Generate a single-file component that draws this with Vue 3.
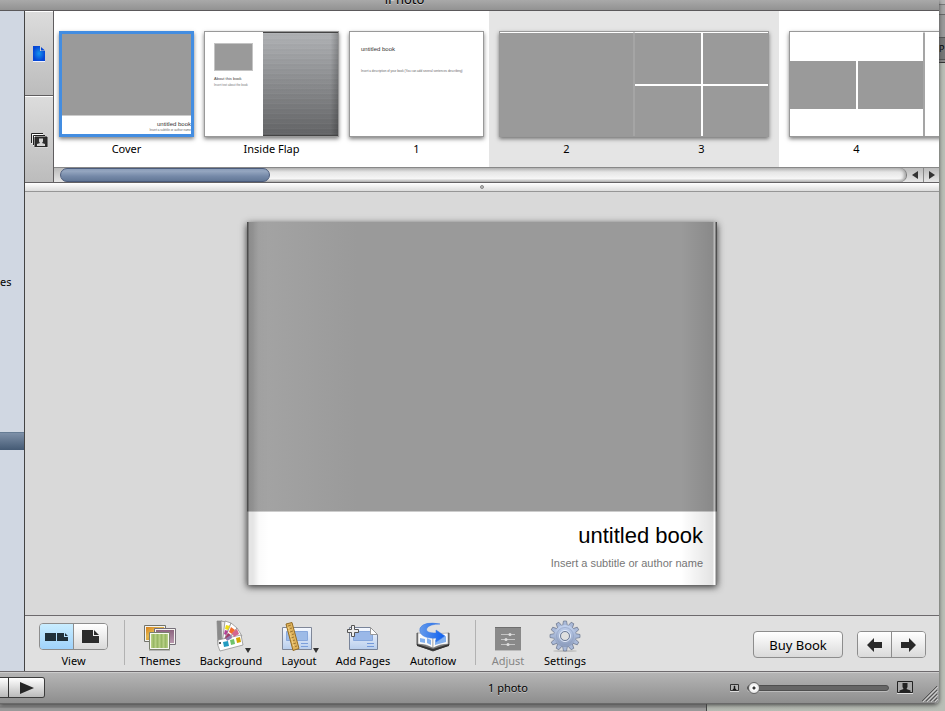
<script setup>
import { ref } from 'vue'

const view = ref('spread')
const zoom = ref(0)
</script>

<template>
  <div class="desktop">
    <div class="backdrop-right" aria-hidden="true"><span>P</span></div>
    <div class="backdrop-bottom" aria-hidden="true"></div>

    <div class="window">
      <header class="titlebar"><span>iPhoto</span></header>

      <div class="body">
        <aside class="sidebar">
          <span class="source">es</span>
          <div class="selected"></div>
        </aside>

        <main class="main">
          <section class="browser">
            <nav class="tabs">
              <button class="tab" aria-label="Pages">
                <svg width="14" height="18" viewBox="0 0 14 18">
                  <defs>
                    <radialGradient id="bluePage">
                      <stop offset="0" stop-color="#1593ee" />
                      <stop offset="1" stop-color="#0546d6" />
                    </radialGradient>
                  </defs>
                  <path d="M1 1h7v5h5v10H1z" fill="url(#bluePage)" />
                  <path d="M9 2l4 3.500H9z" fill="#0546d6" />
                  <path d="M1 16.500h12" stroke="#eef1ff" />
                </svg>
              </button>
              <button class="tab" aria-label="Photos">
                <svg width="18" height="16" viewBox="0 0 18 16">
                  <path d="M2 12V2.500H13M4 14V4.500H15" fill="none" stroke="#fff" />
                  <path d="M1.500 11V1.500H13M3.500 13V3.500H15" fill="none" stroke="#222" />
                  <path d="M5 5h12v10H5z" fill="#2e2e2e" stroke="#222" />
                  <path d="M5 15.800h12.500" stroke="#fff" />
                  <path d="M9 6.500h4v3l-1 1.500 3 1v2H7v-2l3-1-1-1.500z" fill="#d5d5d5" />
                </svg>
              </button>
            </nav>

            <div class="strip">
              <div class="pages">
                <figure class="cell">
                  <div class="thumb cover">
                    <div class="photo"></div>
                    <div class="cover-text"><b>untitled book</b><small>Insert a subtitle or author name</small></div>
                  </div>
                  <figcaption>Cover</figcaption>
                </figure>
                <figure class="cell">
                  <div class="thumb flap">
                    <div class="flap-left">
                      <div class="photo"></div>
                      <b>About this book</b>
                      <small>Insert text about the book</small>
                    </div>
                    <div class="brushed"></div>
                  </div>
                  <figcaption>Inside Flap</figcaption>
                </figure>
                <figure class="cell">
                  <div class="thumb intro">
                    <b>untitled book</b>
                    <small>Insert a description of your book (You can add several sentences describing)</small>
                  </div>
                  <figcaption>1</figcaption>
                </figure>
                <figure class="cell spread current">
                  <div class="thumb pair">
                    <div class="leaf full"></div>
                    <div class="leaf four"><i></i><i></i><i></i><i></i></div>
                  </div>
                  <figcaption><span>2</span><span>3</span></figcaption>
                </figure>
                <figure class="cell spread">
                  <div class="thumb pair">
                    <div class="leaf two"><i></i><i></i></div>
                    <div class="leaf"></div>
                  </div>
                  <figcaption><span>4</span><span></span></figcaption>
                </figure>
              </div>

              <div class="scrollbar">
                <div class="track"><div class="knob"></div></div>
                <button aria-label="Scroll left"><svg width="6" height="8"><path d="M6 0v8L0 4z" fill="#333" /></svg></button>
                <button aria-label="Scroll right"><svg width="6" height="8"><path d="M0 0v8l6-4z" fill="#333" /></svg></button>
              </div>
            </div>
          </section>

          <div class="splitter"><i></i></div>

          <section class="stage">
            <article class="book">
              <div class="book-photo"></div>
              <div class="book-text">
                <h1>untitled book</h1>
                <p>Insert a subtitle or author name</p>
              </div>
            </article>
          </section>

          <section class="toolbar">
            <div class="tool view-tool">
              <div class="segments">
                <button :class="{ on: view === 'spread' }" aria-label="Two-page view" @click="view = 'spread'">
                  <svg width="24" height="10"><path d="M0 1h11v8H0zM12 1h7v4h4v4H12zM20 1l3 3h-3z" fill="#20303a" /></svg>
                </button>
                <button :class="{ on: view === 'single' }" aria-label="Single-page view" @click="view = 'single'">
                  <svg width="18" height="14"><path d="M0 0h11v6h6v7H0zM12 0l5 5h-5z" fill="#2b2b2b" /></svg>
                </button>
              </div>
              <span>View</span>
            </div>
            <div class="rule"></div>

            <button class="tool w-themes">
              <svg width="36" height="32" viewBox="0 0 36 32">
                <defs>
                  <linearGradient id="gold" x2="1" y2="1"><stop offset="0" stop-color="#d8801c" /><stop offset=".4" stop-color="#e3b64c" /><stop offset="1" stop-color="#c77718" /></linearGradient>
                  <linearGradient id="plum" x1="0" x2="0" y1="0" y2="1"><stop offset="0" stop-color="#8d6580" /><stop offset="1" stop-color="#b897ad" /></linearGradient>
                </defs>
                <path d="M2.500 5.500h21v16h-21z" fill="#f4f4f0" stroke="#72736b" />
                <path d="M4 7h18v13H4z" fill="url(#gold)" />
                <path d="M12.500 8.500h21v16h-21z" fill="#f4f4f0" stroke="#77707a" />
                <path d="M14 10h18v13H14z" fill="url(#plum)" />
                <path d="M7.500 12.500h20v17h-20z" fill="#f8f9f2" stroke="#7b816f" />
                <path d="M9 14h17v14H9z" fill="#b7cf84" />
                <path d="M11.500 14v14M15.500 14v14M19.500 14v14M23.500 14v14" stroke="#98b864" stroke-width="2" />
                <path d="M7 30.500h21" stroke="#999" opacity=".6" />
              </svg>
              <span>Themes</span>
            </button>

            <button class="tool w-background">
              <svg width="36" height="32" viewBox="0 0 36 32">
                <g stroke="#858585" stroke-width=".7">
                  <path d="M4 1h5l1 26-5-2z" fill="#8a8a8a" />
                  <path d="M8 1l5 1-4 23z" fill="#e7e7e7" />
                  <path d="M12 1l6 2-9 22z" fill="#fff" />
                  <path d="M18 3l6 5L9 27z" fill="#fff" />
                  <path d="M24 8l5 8-19 12z" fill="#fff" />
                  <path d="M5 20l23-5 2 10-23 6q-3-5-2-11z" fill="#fff" />
                </g>
                <path d="M13 5l4 1-2 4-3-1z" fill="#f0dd16" />
                <path d="M12 10l3 1-2 4-2-1z" fill="#b33f95" />
                <path d="M18 7l4 3-3 4-3-2z" fill="#f36a29" />
                <path d="M15 13l3 2-4 5-2-2z" fill="#a13a66" />
                <path d="M19 13l5-4 2 5-5 3z" fill="#d3668f" />
                <path d="M13 18l5-3 1 3-5 3z" fill="#907caf" />
                <path d="M10 22l5-1 1 5-5 1z" fill="#249bc0" />
                <path d="M17 20l4-1 1 5-4 1z" fill="#70c36c" />
                <path d="M23 18l4-1 1 5-4 1z" fill="#d5a500" />
                <circle cx="7" cy="23" r="1" fill="#222" />
              </svg>
              <i class="caret"></i>
              <span>Background</span>
            </button>

            <button class="tool w-layout">
              <svg width="36" height="32" viewBox="0 0 36 32">
                <defs><linearGradient id="sheet" x1="0" x2="0" y1="0" y2="1"><stop offset="0" stop-color="#f6f9ff" /><stop offset="1" stop-color="#b8ceec" /></linearGradient></defs>
                <path d="M1.500 7.500h29v22h-29z" fill="url(#sheet)" stroke="#7f8798" />
                <path d="M5.500 11.500h21v9h-21z" fill="#9dbbe7" stroke="#88a8dc" />
                <path d="M20 23.500h7M20 26.500h7" stroke="#7b9fdb" />
                <path d="M5 4l6-1.500 7 26-6 2z" fill="#dfb35c" stroke="#946c24" />
                <path d="M10 5l-3 1M11 8l-2 .5M12 11l-3 1M13 14l-2 .5M13 17l-3 1M14 20l-2 .5M15 23l-3 1M16 26l-2 .5" stroke="#8f6a28" stroke-width=".8" />
                <path d="M7 7l6 20" stroke="#f3d68d" stroke-dasharray="2 1" />
              </svg>
              <i class="caret"></i>
              <span>Layout</span>
            </button>

            <button class="tool w-add">
              <svg width="36" height="32" viewBox="0 0 36 32">
                <path d="M4.500 7.500h21l7 7v15h-28z" fill="url(#sheet)" stroke="#78849a" />
                <path d="M8.500 11.500h19v9h-19z" fill="#9ab8e8" stroke="#86a7dc" />
                <path d="M25.500 7.500v7h7z" fill="#fff" stroke="#999" />
                <path d="M22 23.500h7M22 26.500h7" stroke="#7399da" />
                <path d="M6.500 5.500h3v4h4v3h-4v4h-3v-4h-4v-3h4z" fill="#eee" stroke="#555" />
              </svg>
              <span>Add Pages</span>
            </button>

            <button class="tool w-auto">
              <svg width="36" height="32" viewBox="0 0 36 32">
                <defs><linearGradient id="swoosh"><stop offset="0" stop-color="#669bea" /><stop offset="1" stop-color="#0b5ef1" /></linearGradient></defs>
                <path d="M2 13l16 6 16-6v12l-16 6-16-6z" fill="#777" stroke="#5a5a5a" />
                <path d="M2 24l16 5 16-5v2l-16 5-16-5z" fill="#343434" />
                <path d="M3 13q8-1 15 4v11q-7-4-15-4z" fill="#fafafa" stroke="#777" stroke-width=".5" />
                <path d="M33 13q-8-1-15 4v11q7-4 15-4z" fill="#fafafa" stroke="#777" stroke-width=".5" />
                <path d="M5 18l5 1v4l-5-1zM12 18l4 2v5l-4-2zM20 20l11-4v6l-11 3z" fill="#83b1ef" />
                <path d="M25 4Q9 1 5 8c-2 8 8 11 16 10v4l9-6-9-6v3C15 13 10 12 12 8q3-4 13-4z" fill="url(#swoosh)" stroke="#3f7ade" stroke-width=".5" />
              </svg>
              <span>Autoflow</span>
            </button>
            <div class="rule"></div>

            <button class="tool w-adjust" disabled>
              <svg width="36" height="32" viewBox="0 0 36 32">
                <path d="M5 7h26v23H5z" fill="#898989" />
                <path d="M5 7.500h26" stroke="#6e6e6e" />
                <path d="M5 30.500h26" stroke="#bbb" />
                <path d="M11 14.500h14M11 19.500h14M11 24.500h14" stroke="#c5c5c5" />
                <circle cx="20" cy="14.500" r="1.500" fill="#e0e0e0" /><circle cx="16" cy="19.500" r="1.500" fill="#e0e0e0" /><circle cx="18" cy="24.500" r="1.500" fill="#e0e0e0" />
              </svg>
              <span>Adjust</span>
            </button>

            <button class="tool w-settings">
              <svg width="36" height="32" viewBox="0 0 36 32">
                <defs><linearGradient id="gear" x1="0" x2="0" y1="0" y2="1"><stop offset="0" stop-color="#c3d3f0" /><stop offset="1" stop-color="#8c9cbc" /></linearGradient></defs>
                <ellipse cx="18" cy="31" rx="12" ry="1" fill="#aaa" opacity=".6" />
                <g fill="#a9b9d8" stroke="#5d687f" stroke-width=".6">
                  <path v-for="n in 12" :key="n" d="M15.500 6l1-5h3l1 5z" :transform="`rotate(${n * 30} 18 16)`" />
                </g>
                <circle cx="18" cy="16" r="11" fill="url(#gear)" />
                <circle cx="18" cy="16" r="8.500" fill="none" stroke="#8b9cbf" stroke-width=".6" />
                <circle cx="18" cy="16" r="5.500" fill="none" stroke="#e5edfc" />
                <circle cx="18" cy="16" r="4.500" fill="#e0e0e0" stroke="#6e7b96" />
              </svg>
              <span>Settings</span>
            </button>

            <button class="push buy">Buy Book</button>
            <div class="segments arrows">
              <button aria-label="Previous page"><svg width="16" height="14"><path d="M0 7l7-7v4h8v6H7v4z" fill="#292929" /></svg></button>
              <button aria-label="Next page"><svg width="16" height="14"><path d="M15 7L8 0v4H0v6h8v4z" fill="#292929" /></svg></button>
            </div>
          </section>
        </main>
      </div>

      <footer class="status">
        <div class="play">
          <button aria-label="Full screen"></button>
          <button aria-label="Play slideshow"><svg width="14" height="12"><path d="M0 0l14 6-14 6z" fill="#262626" /></svg></button>
        </div>
        <span class="count">1 photo</span>
        <label class="zoom">
          <svg width="9" height="8" viewBox="0 0 9 8"><path d="M.5.500h8v6h-8z" fill="#b5b5b5" stroke="#333" /><path d="M4 2h1v3H4zM3 5h3v1H3z" fill="#111" stroke="#222" stroke-width=".5" /><path d="M0 7.500h9" stroke="#ddd" /></svg>
          <input v-model="zoom" type="range" min="0" max="100" aria-label="Zoom" />
          <svg width="16" height="13" viewBox="0 0 16 13"><path d="M.5.500h15v11H.5z" fill="#a9a9a9" stroke="#222" /><path d="M5.500 2h5v4L9.500 8l4 1.500V11h-11V9.500l4-1.500-1-2z" fill="#222" /><path d="M0 12.500h16" stroke="#ddd" /></svg>
        </label>
        <svg class="grip" width="17" height="17" viewBox="0 0 17 17">
          <path d="M2 17L17 2M6 17L17 6M10 17l7-7M14 17l3-3" stroke="#ccc" />
          <path d="M1 16L16 1M5 16L16 5M9 16l7-7M13 16l3-3" stroke="#555" />
        </svg>
      </footer>
    </div>
  </div>
</template>

<style>
body { margin: 0; }
</style>

<style scoped>
* { box-sizing: border-box; }
button { font: inherit; color: inherit; border: 0; padding: 0; margin: 0; background: none; }
figure { margin: 0; }
svg { display: block; flex: none; }

.desktop {
  position: relative;
  display: flex;
  height: 100vh;
  min-height: 560px;
  padding: 0 6px 7px 0;
  overflow: hidden;
  background: linear-gradient(90deg, #a6aaa2, #b9beb6);
  font-family: "Noto Sans", "Open Sans", sans-serif;
  font-size: 11px;
  line-height: 14px;
  color: #000;
}
.backdrop-right {
  position: absolute;
  top: 0;
  right: 0;
  width: 6px;
  height: 63px;
  padding-top: 42px;
  overflow: hidden;
  background: linear-gradient(#b4b4b4 0 4px, #777 4px 5px, #a5a5a5 5px 14px, #666 14px 15px, #999 15px 37px, #555 37px 38px, #777 38px 59px, #555 59px 60px, #888 60px 62px, #333 62px);
  font-size: 9px;
}
.backdrop-bottom {
  position: absolute;
  left: 0;
  right: 238px;
  bottom: 0;
  height: 10px;
  background: linear-gradient(#777, #939393 5px, #777 6px, #999 7px);
  border-right: 1px solid #444;
}
.window {
  position: relative;
  display: flex;
  flex: 1;
  flex-direction: column;
  min-width: 0;
  overflow: hidden;
  border-radius: 0 0 5px 0;
  background: #e0e0e0;
  box-shadow: 0 1px 4px #444;
}
.titlebar {
  display: flex;
  flex: none;
  align-items: flex-end;
  justify-content: center;
  height: 11px;
  padding: 0 130px 1px 0;
  background: linear-gradient(#a9a9a9, #929292);
  border-bottom: 1px solid #5b595b;
  font-size: 13px;
  line-height: 20px;
}
.titlebar span { text-shadow: 0 1px #ccc; }
.body { display: flex; flex: 1; min-height: 0; }
.sidebar {
  flex: none;
  width: 25px;
  padding-top: 264px;
  background: #d0d7e2;
  border-right: 1px solid #444;
}
.source { display: block; }
.selected {
  height: 18px;
  margin-top: 143px;
  background: linear-gradient(#7e90a8, #445a74);
  border-top: 1px solid #667c94;
}
.main { display: flex; flex: 1; flex-direction: column; min-width: 0; }

.browser { display: flex; flex: none; height: 172px; border-bottom: 1px solid #636163; }
.tabs { display: flex; flex: none; flex-direction: column; width: 29px; border-right: 1px solid #5f5d5f; }
.tab {
  display: flex;
  flex: 1;
  align-items: center;
  justify-content: center;
  background: linear-gradient(#dcdcdc, #bcbcbc);
  border-top: 1px solid #fff;
}
.tab:first-child { flex: none; height: 85px; border-bottom: 1px solid #5f5d5f; }
.strip { display: flex; flex: 1; flex-direction: column; min-width: 0; }
.pages { display: flex; flex: 1; overflow: hidden; background: #fff; }
.cell { flex: none; width: 145px; padding: 20px 5px 0; }
.spread { width: 290px; padding: 20px 10px 0; }
.current { background: #e5e5e5; }
figcaption { display: flex; justify-content: center; margin-top: 5px; }
figcaption span { flex: 1; text-align: center; }
.thumb {
  height: 106px;
  overflow: hidden;
  border: 1px solid #999;
  background: #fff;
  box-shadow: 0 2px 4px rgba(0, 0, 0, .5);
  font-family: "Liberation Sans", Arial, sans-serif;
  white-space: nowrap;
}
.thumb b, .thumb small { display: block; font-weight: 400; }
.thumb small { color: #666; font-size: 3px; line-height: 4px; }
.photo { background: #9a9a9a; border-bottom: 1px solid #ccc; }
.cover { border: 3px solid #438de1; text-align: right; }
.cover .photo { height: 82px; }
.cover-text { padding-top: 4px; }
.cover-text b { font-size: 6px; line-height: 8px; color: #333; }
.flap { display: flex; }
.flap-left { flex: none; width: 58px; padding: 11px 10px 0 9px; }
.flap-left .photo { height: 28px; border: 1px solid #c4c4c4; }
.flap-left b { margin-top: 5px; font-size: 4px; line-height: 5px; color: #444; }
.flap-left small { margin-top: 2px; color: #777; }
.brushed {
  flex: 1;
  background:
    linear-gradient(90deg, transparent 90%, rgba(0, 0, 0, .2)),
    repeating-linear-gradient(rgba(255, 255, 255, .03) 0 1px, rgba(0, 0, 0, .02) 1px 3px, transparent 3px 5px),
    linear-gradient(#b0b2b5, #636466);
  border-top: 1px solid #444;
  border-bottom: 1px solid #444;
}
.intro { padding: 13px 11px 0; }
.intro b { font-size: 6px; line-height: 8px; color: #333; }
.intro small { margin-top: 16px; }
.pair { display: grid; grid-template-columns: 1fr 1fr; }
.leaf { border-top: 1px solid #fff; }
.leaf:first-child { border-right: 1px solid #a5a5a5; }
.leaf:last-child { border-left: 1px solid #a5a5a5; }
.full { background: #9a9a9a; }
.four, .two { display: grid; grid-template-columns: 1fr 1fr; gap: 2px; }
.four i, .two i { background: #9a9a9a; }
.two { padding: 28px 0 27px; }

.scrollbar {
  display: flex;
  flex: none;
  height: 15px;
  border-top: 1px solid #888;
  background: linear-gradient(#bbb, #e6e6e6);
}
.track {
  flex: 1;
  margin-left: 6px;
  border-right: 1px solid #777;
  border-radius: 8px;
  background: linear-gradient(#b8b8b8, #e6e6e6 30%, #f6f6f6 75%, #b4b4b4);
  box-shadow: inset -2px 0 3px #aaa;
}
.knob {
  width: 210px;
  height: 14px;
  border: 1px solid #4b5b7b;
  border-radius: 7px;
  background: linear-gradient(#8a9db9, #94a5bf 20%, #7589a8 60%, #627796);
}
.scrollbar button { display: flex; align-items: center; justify-content: center; width: 16px; }
.scrollbar button:last-child { border-left: 1px solid #888; }

.splitter {
  display: flex;
  flex: none;
  align-items: center;
  justify-content: center;
  height: 9px;
  background: linear-gradient(#fff, #dcdcdc);
  border-bottom: 1px solid #969696;
}
.splitter i { width: 4px; height: 4px; border: 1px solid #888; border-radius: 50%; background: #bbb; }

.stage { display: flex; flex: 1; align-items: center; justify-content: center; min-height: 0; background: #d9d9d9; }
.book {
  position: relative;
  display: flex;
  flex-direction: column;
  width: 470px;
  max-width: 90%;
  aspect-ratio: 470 / 363;
  background: #fff;
  box-shadow: 0 2px 7px #333;
}
.book::after {
  content: "";
  position: absolute;
  inset: 0;
  background: linear-gradient(90deg, rgba(0, 0, 0, .5) 0 1px, rgba(0, 0, 0, .1) 2px 6px, rgba(0, 0, 0, .02) 12px, transparent 22px, transparent calc(100% - 36px), rgba(0, 0, 0, .11) calc(100% - 4px), rgba(255, 255, 255, .3) calc(100% - 3px) calc(100% - 2px), rgba(0, 0, 0, .5) calc(100% - 1px));
  pointer-events: none;
}
.book-photo { flex: 1; background: linear-gradient(90deg, #999, #a4a4a4 8px, #9a9a9a 110px); border-bottom: 1px solid #ccc; }
.book-text { height: 73px; padding: 10px 14px 0; font-family: "Liberation Sans", Arial, sans-serif; text-align: right; }
.book-text h1 { margin: 0; font-size: 22px; font-weight: 400; line-height: 28px; }
.book-text p { margin: 6px 0 0; font-size: 11px; line-height: 14px; color: #777; }

.toolbar {
  display: flex;
  flex: none;
  height: 56px;
  padding: 4px 13px 0 14px;
  background: #e0e0e0;
  border-top: 1px solid #6d6a6d;
  font-size: 11px;
}
.tool {
  position: relative;
  display: flex;
  flex: none;
  flex-direction: column;
  align-items: center;
  height: 50px;
  margin-right: 18px;
  line-height: 14px;
  white-space: nowrap;
}
.tool > span { margin-top: 2px; }
.tool:disabled { color: #858585; }
.view-tool { margin-right: 16px; padding-top: 3px; }
.view-tool > span { margin-top: 4px; }
.rule { flex: none; width: 1px; height: 45px; margin-right: 14px; background: #b2b2b2; }
.w-themes, .w-settings { width: 42px; }
.w-background { width: 64px; }
.w-layout { width: 36px; }
.w-add { width: 56px; }
.w-auto { width: 48px; margin-right: 18px; }
.w-adjust { width: 36px; }
.caret {
  position: absolute;
  top: 28px;
  left: calc(50% + 14px);
  border: 3px solid transparent;
  border-top: 5px solid #333;
  border-bottom: 0;
}
.segments { display: flex; flex: none; width: 69px; height: 27px; border: 1px solid #8d8d8d; border-radius: 4px; overflow: hidden; }
.segments button { display: flex; flex: 1; align-items: center; justify-content: center; background: linear-gradient(#fff, #dadada); }
.segments button + button { border-left: 1px solid #8d8d8d; }
.segments .on { background: linear-gradient(#c9edff, #9fd2fb); }
.push {
  width: 90px;
  height: 27px;
  margin-top: 11px;
  border: 1px solid #8d8d8d;
  border-radius: 4px;
  background: linear-gradient(#fff, #dadada);
  font-size: 13px;
}
.buy { margin-left: auto; }
.arrows { margin: 11px 0 0 14px; }

.status {
  position: relative;
  display: grid;
  grid-template-columns: 1fr auto 1fr;
  flex: none;
  align-items: center;
  height: 33px;
  padding: 0 26px 0 0;
  background: linear-gradient(#b6b6b6, #8e8e8e);
  border-top: 1px solid #6d6a6d;
  border-bottom: 1px solid #696969;
  box-shadow: inset 0 1px #ccc;
}
.play { display: flex; height: 21px; width: 45px; border: 1px solid #3c3c3c; border-left: 0; border-radius: 0 3px 3px 0; overflow: hidden; }
.play button { display: flex; width: 8px; align-items: center; justify-content: center; background: linear-gradient(#fff, #bababa); }
.play button + button { flex: 1; border-left: 1px solid #333; }
.count { padding-left: 103px; text-shadow: 0 1px #c5c5c5; }
.zoom { display: flex; align-items: center; justify-content: flex-end; gap: 8px; }
.zoom input { width: 142px; height: 14px; margin: 0; appearance: none; background: none; }
.zoom input::-webkit-slider-runnable-track { height: 6px; border-radius: 3px; border: 1px solid #4f4f4f; background: #666; box-shadow: 0 1px #bbb; }
.zoom input::-webkit-slider-thumb {
  appearance: none;
  width: 12px;
  height: 12px;
  margin: -4px 0 0;
  border: 1px solid #666;
  border-radius: 50%;
  background: radial-gradient(circle, #333 0 1px, #fff 2px, #eee 4px, #ccc);
}
.grip { position: absolute; right: 1px; bottom: 1px; }
</style>
